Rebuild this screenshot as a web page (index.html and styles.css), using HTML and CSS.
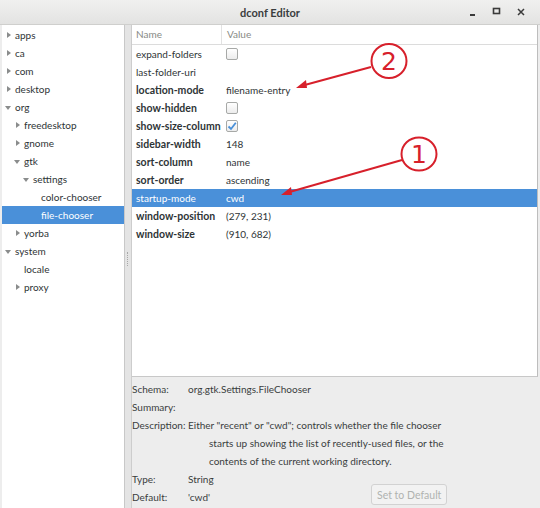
FILE: index.html
```
<!DOCTYPE html>
<html lang="en">
<head>
  <meta charset="UTF-8" />
  <title>dconf Editor</title>
  <link rel="stylesheet" href="styles.css">
</head>
<body>
  <div class="window">
    <header class="titlebar">
      <span class="title">dconf Editor</span>
      <div class="controls">
        <svg width="10" height="10" viewBox="0 0 10 10"><rect x="2" y="7" width="5" height="2" fill="#3a3a3a"/></svg>
        <svg width="10" height="10" viewBox="0 0 10 10"><rect x="1.5" y="1.5" width="6" height="5" fill="none" stroke="#3a3a3a" stroke-width="1.6"/></svg>
        <svg width="10" height="10" viewBox="0 0 10 10"><path d="M2 2 L8 8 M8 2 L2 8" stroke="#3a3a3a" stroke-width="1.5"/></svg>
      </div>
    </header>

    <div class="main">
      <nav class="tree">
        <div class="node l0"><span class="exp closed"></span>apps</div>
        <div class="node l0"><span class="exp closed"></span>ca</div>
        <div class="node l0"><span class="exp closed"></span>com</div>
        <div class="node l0"><span class="exp closed"></span>desktop</div>
        <div class="node l0"><span class="exp open"></span>org</div>
        <div class="node l1"><span class="exp closed"></span>freedesktop</div>
        <div class="node l1"><span class="exp closed"></span>gnome</div>
        <div class="node l1"><span class="exp open"></span>gtk</div>
        <div class="node l2"><span class="exp open"></span>settings</div>
        <div class="node l3"><span class="exp"></span>color-chooser</div>
        <div class="node l3 selected"><span class="exp"></span>file-chooser</div>
        <div class="node l1"><span class="exp closed"></span>yorba</div>
        <div class="node l0"><span class="exp open"></span>system</div>
        <div class="node l1"><span class="exp"></span>locale</div>
        <div class="node l1"><span class="exp closed"></span>proxy</div>
      </nav>

      <div class="handle"><span></span></div>

      <section class="content">
        <div class="keys">
          <div class="keys-head">
            <div class="col-name">Name</div>
            <div class="col-value">Value</div>
          </div>
          <div class="key"><div class="col-name">expand-folders</div><div class="col-value"><span class="check"></span></div></div>
          <div class="key"><div class="col-name">last-folder-uri</div><div class="col-value"></div></div>
          <div class="key set"><div class="col-name">location-mode</div><div class="col-value">filename-entry</div></div>
          <div class="key set"><div class="col-name">show-hidden</div><div class="col-value"><span class="check"></span></div></div>
          <div class="key set"><div class="col-name">show-size-column</div><div class="col-value"><span class="check on"><svg width="10" height="10" viewBox="0 0 10 10"><path d="M1.5 5.5 L4 8 L8.8 1.8" fill="none" stroke="#4a90d9" stroke-width="1.8"/></svg></span></div></div>
          <div class="key set"><div class="col-name">sidebar-width</div><div class="col-value">148</div></div>
          <div class="key set"><div class="col-name">sort-column</div><div class="col-value">name</div></div>
          <div class="key set"><div class="col-name">sort-order</div><div class="col-value">ascending</div></div>
          <div class="key selected"><div class="col-name">startup-mode</div><div class="col-value">cwd</div></div>
          <div class="key set"><div class="col-name">window-position</div><div class="col-value">(279, 231)</div></div>
          <div class="key set"><div class="col-name">window-size</div><div class="col-value">(910, 682)</div></div>
        </div>

        <div class="info">
          <div class="info-row"><span class="label">Schema:</span><span>org.gtk.Settings.FileChooser</span></div>
          <div class="info-row"><span class="label">Summary:</span><span></span></div>
          <div class="info-row"><span class="label">Description:</span><span class="desc">Either "recent" or "cwd"; controls whether the file chooser<br>starts up showing the list of recently-used files, or the<br>contents of the current working directory.</span></div>
          <div class="info-row"><span class="label">Type:</span><span>String</span></div>
          <div class="info-row"><span class="label">Default:</span><span class="default">'cwd'</span><button class="reset" disabled>Set to Default</button></div>
        </div>
      </section>
    </div>

    <svg class="marks" width="540" height="508" viewBox="0 0 540 508">
      <g fill="none" stroke="#d7202b" stroke-width="2">
        <ellipse cx="389" cy="61" rx="17.5" ry="17"/>
        <line x1="371" y1="67" x2="301" y2="86"/>
        <ellipse cx="419" cy="154" rx="17.5" ry="16.5"/>
        <line x1="402" y1="160" x2="286" y2="193"/>
      </g>
      <g fill="#d7202b">
        <polygon points="296,88 306,80 307,88"/>
        <polygon points="281,195 291,187 292,195"/>
      </g>
      <text x="389" y="70" class="num">2</text>
      <text x="419" y="163" class="num">1</text>
    </svg>
  </div>
</body>
</html>
```

FILE: styles.css
```
body {
  margin: 0;
  background: #2b2b2b;
  font-family: Lato, "DejaVu Sans", sans-serif;
  font-size: 10px;
  color: #2e3436;
}

.window {
  position: relative;
  width: 540px;
  height: 508px;
  background: #ededed;
  display: flex;
  flex-direction: column;
  overflow: hidden;
}

.titlebar {
  height: 25px;
  flex: none;
  display: flex;
  align-items: center;
  justify-content: center;
  background: linear-gradient(#f0f0ef, #e3e3e2);
  border-bottom: 1px solid #cfcfcd;
  box-sizing: border-box;
  position: relative;
}

.title {
  font-weight: bold;
  font-size: 11px;
  color: #3a3d3e;
}

.controls {
  position: absolute;
  right: 14px;
  top: 7px;
  display: flex;
  gap: 14px;
}

.main {
  flex: 1;
  display: flex;
  min-height: 0;
}

/* left tree */
.tree {
  width: 122px;
  margin-left: 2px;
  background: #fff;
  border-right: 1px solid #c8c8c8;
  padding-top: 1px;
}

.node {
  height: 18px;
  line-height: 18px;
  display: flex;
  align-items: center;
  white-space: nowrap;
}

.node.l0 { padding-left: 2px; }
.node.l1 { padding-left: 11px; }
.node.l2 { padding-left: 20px; }
.node.l3 { padding-left: 28px; }

.node.selected {
  background: #4a90d9;
  color: #fff;
}

.exp {
  width: 11px;
  height: 18px;
  flex: none;
  position: relative;
}

.exp.closed::before {
  content: "";
  position: absolute;
  left: 3px;
  top: 6px;
  border-left: 4px solid #8a8c8c;
  border-top: 3px solid transparent;
  border-bottom: 3px solid transparent;
}

.exp.open::before {
  content: "";
  position: absolute;
  left: 1px;
  top: 8px;
  border-top: 4px solid #8a8c8c;
  border-left: 3px solid transparent;
  border-right: 3px solid transparent;
}

.handle {
  width: 6px;
  background: #e4e4e4;
  border-right: 1px solid #cdcdcd;
  display: flex;
  align-items: center;
  justify-content: center;
}

.handle span {
  width: 1px;
  height: 14px;
  margin-top: -16px;
  border-left: 1px dotted #a8a8a8;
}

/* right pane */
.content {
  flex: 1;
  display: flex;
  flex-direction: column;
  margin-right: 2px;
}

.keys {
  height: 351px;
  background: #fff;
  border-bottom: 1px solid #c8c8c8;
  border-right: 1px solid #bdbdbd;
}

.keys-head {
  display: flex;
  height: 19px;
  line-height: 19px;
  border-bottom: 1px solid #dcdcdc;
  color: #888a85;
}

.keys-head .col-name {
  border-right: 1px solid #e2e2e2;
}

.key {
  display: flex;
  height: 18px;
  line-height: 18px;
}

.key.set .col-name {
  font-weight: bold;
  font-size: 10.5px;
}

.key.selected {
  background: #4a90d9;
  color: #fff;
}

.col-name {
  width: 85px;
  padding-left: 4px;
  white-space: nowrap;
}

.col-value {
  padding-left: 5px;
  display: flex;
  align-items: center;
}

.check {
  width: 10px;
  height: 10px;
  border: 1px solid #a7a9a7;
  border-radius: 2px;
  background: linear-gradient(#ffffff, #ececec);
  display: flex;
  align-items: center;
  justify-content: center;
}

/* info area */
.info {
  padding-top: 3px;
}

.info-row {
  display: flex;
  line-height: 18px;
  min-height: 18px;
  color: #3a3d3e;
}

.label {
  width: 56px;
  flex: none;
}

.desc {
  padding-left: 21px;
  text-indent: -21px;
  display: block;
  line-height: 18px;
}

.default {
  width: 183px;
  flex: none;
}

.reset {
  height: 21px;
  margin-top: -4px;
  padding: 0 5px;
  font-family: inherit;
  font-size: 10.5px;
  color: #b0b2b0;
  background: #f2f2f2;
  border: 1px solid #d2d2d2;
  border-radius: 3px;
}

.marks {
  position: absolute;
  left: 0;
  top: 0;
  pointer-events: none;
}

.num {
  font-family: "DejaVu Sans", sans-serif;
  font-size: 25px;
  fill: #d7202b;
  text-anchor: middle;
}
```
